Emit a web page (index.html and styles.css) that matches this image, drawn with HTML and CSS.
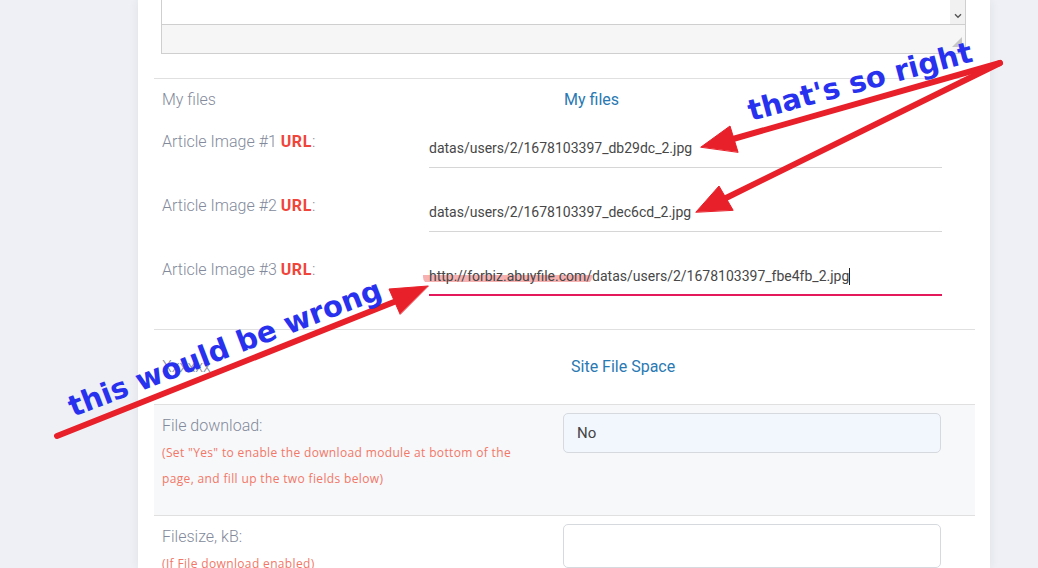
FILE: index.html
```html
<!DOCTYPE html>
<html lang="en">
<head>
<meta charset="utf-8">
<title>Article files</title>
<link rel="stylesheet" href="styles.css">
</head>
<body>
<div class="panel">
  <div class="editor">
    <div class="editor-body">
      <div class="sb">
        <svg class="chev" width="8" height="6" viewBox="0 0 8 6"><path d="M1 1.2 L4 4.2 L7 1.2" fill="none" stroke="#555" stroke-width="1.4"/></svg>
      </div>
    </div>
    <div class="editor-foot">
      <svg class="grip" width="10" height="10" viewBox="0 0 10 10"><polygon points="10,0 10,10 0,10" fill="#c6c6c6"/></svg>
    </div>
  </div>

  <section class="sec files">
    <div class="head-row">
      <div class="lbl">My files</div>
      <div class="link first">My files</div>
    </div>
    <div class="url-row">
      <div class="lbl">Article Image #1 <b class="url">URL</b>:</div>
      <div class="url-value">datas/users/2/1678103397_db29dc_2.jpg</div>
    </div>
    <div class="url-row">
      <div class="lbl">Article Image #2 <b class="url">URL</b>:</div>
      <div class="url-value">datas/users/2/1678103397_dec6cd_2.jpg</div>
    </div>
    <div class="url-row">
      <div class="lbl">Article Image #3 <b class="url">URL</b>:</div>
      <div class="url-value focus"><span class="hl">http://forbiz.abuyfile.com/</span>datas/users/2/1678103397_fbe4fb_2.jpg<span class="caret"></span></div>
    </div>
  </section>

  <section class="sec split space">
    <div class="lbl">Xxxxxx</div>
    <div class="link">Site File Space</div>
  </section>

  <section class="sec split gray">
    <div class="left">
      <div class="lbl">File download:</div>
      <div class="hint">(Set "Yes" to enable the download module at bottom of the page, and fill up the two fields below)</div>
    </div>
    <div class="right">
      <div class="select">No</div>
    </div>
  </section>

  <section class="sec split">
    <div class="left">
      <div class="lbl">Filesize, kB:</div>
      <div class="hint">(If File download enabled)</div>
    </div>
    <div class="right">
      <div class="text-input"></div>
    </div>
  </section>
</div>

<svg class="notes" width="1038" height="568" viewBox="0 0 1038 568">
  <g fill="#e8202a" stroke="#e8202a" stroke-linecap="round" stroke-linejoin="round">
    <line x1="1000" y1="63" x2="733" y2="139" stroke-width="6"/>
    <polygon points="701,147 730,126 738,152" stroke-width="1"/>
    <line x1="1000" y1="63" x2="726" y2="198" stroke-width="6"/>
    <polygon points="696,212 719,186 733,210" stroke-width="1"/>
    <line x1="57" y1="436" x2="394" y2="302" stroke-width="6"/>
    <polygon points="428,286 389,289 400,314" stroke-width="1"/>
  </g>
  <g font-family="'DejaVu Sans', sans-serif" font-weight="bold" fill="#2832ee">
    <text x="751" y="121" font-size="29" transform="rotate(-15 751 121)">that's so right</text>
    <text x="73" y="417" font-size="29" transform="rotate(-21 73 417)">this would be wrong</text>
  </g>
</svg>
</body>
</html>
```

FILE: styles.css
```css
html, body {
  margin: 0;
  padding: 0;
}
body {
  background: #eef0f5;
  width: 1038px;
  height: 568px;
  overflow: hidden;
  position: relative;
  font-family: Roboto, "Liberation Sans", sans-serif;
}
.panel {
  margin-left: 138px;
  width: 852px;
  height: 568px;
  box-sizing: border-box;
  padding: 0 15px 0 16px;
  background: #fff;
  box-shadow: 0 0 9px rgba(40, 50, 80, 0.08);
  overflow: hidden;
}
.editor {
  margin: 0 9px 0 7px;
  border: 1px solid #cfcfcf;
  border-top: none;
}
.editor-body {
  height: 24px;
  display: flex;
  justify-content: flex-end;
}
.sb {
  width: 15px;
  background: #f1f1f1;
  display: flex;
  align-items: flex-end;
  justify-content: center;
  padding-bottom: 5px;
  box-sizing: border-box;
}
.chev {
  display: block;
}
.editor-foot {
  height: 29px;
  border-top: 1px solid #cfcfcf;
  background: #f6f6f6;
  display: flex;
  justify-content: flex-end;
  align-items: flex-end;
  padding: 0 3px 6px 0;
  box-sizing: border-box;
}
.grip {
  display: block;
}
.sec {
  border-top: 1px solid #e0e0e0;
}
.files {
  margin-top: 24px;
  padding: 10px 0 6px;
}
.lbl {
  font-weight: 300;
  font-size: 16px;
  line-height: 20px;
  color: #838a9b;
  padding-left: 8px;
  padding-top: 1px;
}
.url {
  font-weight: 700;
  color: #f0453b;
  letter-spacing: 0.6px;
}
.link {
  font-size: 16px;
  line-height: 20px;
  color: #2a79b3;
  padding-left: 8px;
  padding-top: 1px;
}
.link.first {
  padding-left: 1px;
}
.head-row {
  display: grid;
  grid-template-columns: 409px 1fr;
  height: 20px;
  margin-bottom: 22px;
}
.url-row {
  display: grid;
  grid-template-columns: 275px 513px;
  height: 64px;
}
.url-value {
  height: 36px;
  line-height: 34px;
  border-bottom: 1px solid #d6d6d6;
  font-size: 14px;
  color: #474747;
  white-space: nowrap;
}
.url-value.focus {
  border-bottom: 2px solid #e4195c;
  height: 35px;
}
.hl {
  background: linear-gradient(to bottom, transparent 45%, rgba(238, 100, 100, 0.5) 45%, rgba(238, 100, 100, 0.5) 88%, transparent 88%);
  padding-left: 6px;
  margin-left: -6px;
  border-radius: 7px;
}
.caret {
  display: inline-block;
  width: 1px;
  height: 17px;
  background: #222;
  vertical-align: -4px;
}
.split {
  display: grid;
  grid-template-columns: 409px 1fr;
}
.space {
  padding: 26px 0 27px;
}
.gray {
  background: #f7f8fa;
}
.left {
  padding: 10px 0 23px;
}
.hint {
  margin-top: 4px;
  padding-left: 8px;
  font-family: "Open Sans", sans-serif;
  font-size: 12px;
  line-height: 26px;
  color: #f27767;
  width: 360px;
  letter-spacing: 0.35px;
}
.right {
  padding-top: 8px;
}
.select {
  width: 378px;
  height: 40px;
  box-sizing: border-box;
  border: 1px solid #d6d9de;
  border-radius: 5px;
  background: #f2f6fd;
  padding-left: 13px;
  font-size: 15px;
  line-height: 38px;
  color: #444;
}
.text-input {
  width: 378px;
  height: 44px;
  box-sizing: border-box;
  border: 1px solid #d6d9de;
  border-radius: 5px;
  background: #fff;
}
.notes {
  position: absolute;
  left: 0;
  top: 0;
  pointer-events: none;
}
```
